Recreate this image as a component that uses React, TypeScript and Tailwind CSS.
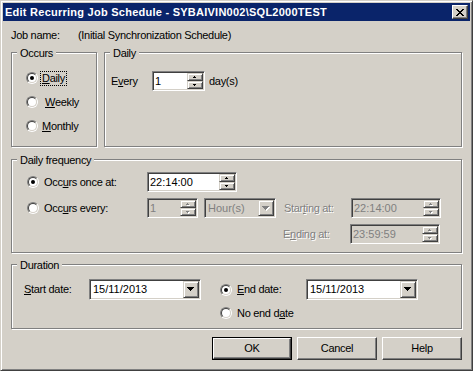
import clsx from "clsx";
import type { ReactNode } from "react";

// classic win32 3D edges
const raised =
  "border border-t-[#D4D0C8] border-l-[#D4D0C8] border-b-[#404040] border-r-[#404040] shadow-[inset_1px_1px_0_#fff,inset_-1px_-1px_0_#808080] bg-[#D4D0C8]";
const sunken =
  "border border-t-[#808080] border-l-[#808080] border-b-white border-r-white p-[1px] shadow-[inset_1px_1px_0_#404040,inset_-1px_-1px_0_#D4D0C8]";
const etched = "border border-[#808080] shadow-[inset_1px_1px_0_#fff,1px_1px_0_#fff]";
const embossed = "text-[#808080] [text-shadow:1px_1px_0_#fff]";

const U = ({ children }: { children: ReactNode }) => <span className="underline underline-offset-[1px]">{children}</span>;

function Tri({ rows, disabled }: { rows: number[]; disabled?: boolean }) {
  const w = Math.max(...rows);
  return (
    <svg width={w + 1} height={rows.length + 1} shapeRendering="crispEdges" className="block">
      {disabled &&
        rows.map((r, i) => <rect key={"s" + i} x={(w - r) / 2 + 1} y={i + 1} width={r} height={1} fill="#fff" />)}
      {rows.map((r, i) => (
        <rect key={i} x={(w - r) / 2} y={i} width={r} height={1} fill={disabled ? "#808080" : "#000"} />
      ))}
    </svg>
  );
}

function Radio({ checked }: { checked?: boolean }) {
  return (
    <span className="w-[12px] h-[12px] shrink-0 flex rounded-full border border-t-[#808080] border-l-[#808080] border-b-white border-r-white">
      <span className="flex-1 flex items-center justify-center rounded-full bg-white border border-t-[#404040] border-l-[#404040] border-b-[#D4D0C8] border-r-[#D4D0C8]">
        {checked && <span className="w-[4px] h-[4px] rounded-full bg-black" />}
      </span>
    </span>
  );
}

function Option({
  checked,
  focus,
  children,
  className,
  labelClass = "ml-[2px]",
}: {
  checked?: boolean;
  focus?: boolean;
  children: ReactNode;
  className?: string;
  labelClass?: string;
}) {
  return (
    <div className={clsx("flex items-center", className)}>
      <Radio checked={checked} />
      <span
        className={clsx(
          "border px-[1px] leading-[13px] whitespace-nowrap",
          focus ? "border-dotted border-black" : "border-transparent",
          labelClass
        )}
      >
        {children}
      </span>
    </div>
  );
}

function Spin({ value, className, disabled }: { value: string; className?: string; disabled?: boolean }) {
  return (
    <div className={clsx(sunken, "flex h-[20px]", disabled ? "bg-[#D4D0C8]" : "bg-white", className)}>
      <span className={clsx("flex-1 pl-[1px] flex items-center tracking-normal", disabled && "text-[#808080]")}>
        {value}
      </span>
      <div className="w-[16px] flex flex-col">
        <div className={clsx(raised, "flex-1 flex items-center justify-center")}>
          <Tri rows={[1, 3]} disabled={disabled} />
        </div>
        <div className={clsx(raised, "flex-1 flex items-center justify-center")}>
          <Tri rows={[3, 1]} disabled={disabled} />
        </div>
      </div>
    </div>
  );
}

function Combo({ value, className, disabled }: { value: string; className?: string; disabled?: boolean }) {
  return (
    <div className={clsx(sunken, "flex", disabled ? "bg-[#D4D0C8]" : "bg-white", className)}>
      <span className={clsx("flex-1 pl-[2px] flex items-center tracking-normal", disabled && "text-[#808080]")}>
        {value}
      </span>
      <div className={clsx(raised, "w-[16px] flex items-center justify-center")}>
        <Tri rows={[7, 5, 3, 1]} disabled={disabled} />
      </div>
    </div>
  );
}

function Group({ label, className, children }: { label: string; className?: string; children?: ReactNode }) {
  return (
    <div className={clsx("relative", etched, className)}>
      <span className="absolute -top-[6px] left-[5px] px-[3px] bg-[#D4D0C8] whitespace-nowrap">{label}</span>
      {children}
    </div>
  );
}

function Button({ children, isDefault }: { children: ReactNode; isDefault?: boolean }) {
  return (
    <div className={clsx("w-[80px] h-[23px] flex", isDefault && "border border-black")}>
      <div className="flex-1 flex items-center justify-center border border-t-white border-l-white border-b-[#404040] border-r-[#404040] shadow-[inset_-1px_-1px_0_#808080]">
        {children}
      </div>
    </div>
  );
}

export default function App() {
  return (
    <div className="w-[473px] h-[371px] overflow-hidden bg-[#D4D0C8] border border-t-[#D4D0C8] border-l-[#D4D0C8] border-b-[#404040] border-r-[#404040] shadow-[inset_1px_1px_0_#fff,inset_-1px_-1px_0_#808080] p-[2px] flex flex-col font-['Liberation_Sans',Arial,sans-serif] text-[11px] leading-[13px] tracking-[-0.3px] text-black">
      {/* Title bar */}
      <div className="h-[18px] shrink-0 bg-[#0A246A] flex items-center px-[2px]">
        <span className="text-white font-bold tracking-[0.25px] whitespace-nowrap">
          Edit Recurring Job Schedule - SYBAIVIN002\SQL2000TEST
        </span>
        <div className="ml-auto w-[16px] h-[14px] flex items-center justify-center bg-[#D4D0C8] border border-t-white border-l-white border-b-[#404040] border-r-[#404040] shadow-[inset_-1px_-1px_0_#808080]">
          <svg width="8" height="7" shapeRendering="crispEdges" className="block">
            <path d="M0 0h2v1H0zM6 0h2v1H6zM1 1h2v1H1zM5 1h2v1H5zM2 2h4v1H2zM3 3h2v1H3zM2 4h4v1H2zM1 5h2v1H1zM5 5h2v1H5zM0 6h2v1H0zM6 6h2v1H6z" fill="#000" />
          </svg>
        </div>
      </div>

      <div className="flex flex-col px-[8px]">
        {/* Job name */}
        <div className="mt-[8px] flex h-[13px] whitespace-nowrap">
          <span className="w-[67px]">Job name:</span>
          <span>(Initial Synchronization Schedule)</span>
        </div>

        {/* Occurs / Daily */}
        <div className="mt-[10px] flex">
          <Group label="Occurs" className="w-[86px] h-[95px]">
            <div className="pt-[17px] pl-[14px] flex flex-col gap-[8px]">
              <Option checked focus className="h-[16px]">
                <U>D</U>aily
              </Option>
              <Option className="h-[16px]" labelClass="ml-[5px]">
                <U>W</U>eekly
              </Option>
              <Option className="h-[16px]">
                <U>M</U>onthly
              </Option>
            </div>
          </Group>
          <Group label="Daily" className="ml-[7px] w-[358px] h-[95px]">
            <div className="mt-[18px] pl-[6px] flex items-center">
              <span className="w-[41px]">
                E<U>v</U>ery
              </span>
              <Spin value="1" className="w-[53px]" />
              <span className="ml-[4px]">day(s)</span>
            </div>
          </Group>
        </div>

        {/* Daily frequency */}
        <Group label="Daily frequency" className="mt-[12px] h-[94px]">
          <div className="pt-[12px] pl-[15px] flex flex-col">
            <div className="flex items-center h-[20px]">
              <Option checked labelClass="ml-[3px] w-[105px]">
                Occ<U>u</U>rs once at:
              </Option>
              <Spin value="22:14:00" className="w-[90px]" />
            </div>
            <div className="mt-[6px] flex items-center h-[20px]">
              <Option labelClass="ml-[3px] w-[105px]">
                Occ<U>u</U>rs every:
              </Option>
              <Spin value="1" disabled className="w-[51px]" />
              <Combo value="Hour(s)" disabled className="ml-[6px] w-[72px] h-[20px]" />
              <span className={clsx("ml-[8px] w-[67px]", embossed)}>
                Star<U>t</U>ing at:
              </span>
              <Spin value="22:14:00" disabled className="w-[90px]" />
            </div>
            <div className="mt-[6px] flex items-center h-[20px] ml-[256px]">
              <span className={clsx("w-[67px]", embossed)}>
                E<U>n</U>ding at:
              </span>
              <Spin value="23:59:59" disabled className="w-[90px]" />
            </div>
          </div>
        </Group>

        {/* Duration */}
        <Group label="Duration" className="mt-[11px] h-[65px]">
          <div className="pt-[14px] pl-[12px] flex items-start">
            <div className="flex items-center h-[21px]">
              <span className="w-[65px]">
                <U>S</U>tart date:
              </span>
              <Combo value="15/11/2013" className="w-[112px] h-[21px]" />
            </div>
            <div className="ml-[19px] flex flex-col">
              <div className="flex items-center h-[21px]">
                <Option checked labelClass="ml-[3px] w-[71px]">
                  <U>E</U>nd date:
                </Option>
                <Combo value="15/11/2013" className="w-[112px] h-[21px]" />
              </div>
              <Option className="mt-[5px] h-[16px]" labelClass="ml-[3px]">
                No end d<U>a</U>te
              </Option>
            </div>
          </div>
        </Group>

        {/* Buttons */}
        <div className="mt-[8px] flex justify-end gap-[5px]">
          <Button isDefault>OK</Button>
          <Button>Cancel</Button>
          <Button>Help</Button>
        </div>
      </div>
    </div>
  );
}
